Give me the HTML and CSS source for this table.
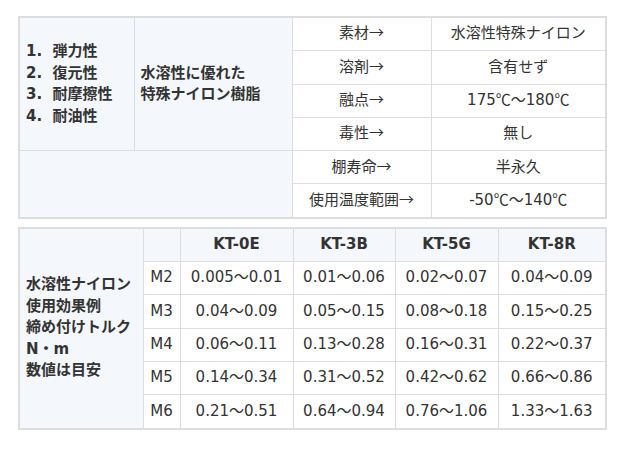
FILE: index.html
```html
<!DOCTYPE html>
<html lang="ja">
<head>
<meta charset="utf-8">
<link rel="stylesheet" href="styles.css">
</head>
<body>
<div class="page">
  <table class="spec">
    <colgroup>
      <col class="c1"><col class="c2"><col class="c3"><col class="c4">
    </colgroup>
    <tbody>
      <tr>
        <td class="head-cell" rowspan="4">1.&nbsp;&nbsp;弾力性<br>2.&nbsp;&nbsp;復元性<br>3.&nbsp;&nbsp;耐摩擦性<br>4.&nbsp;&nbsp;耐油性</td>
        <td class="head-cell" rowspan="4">水溶性に優れた<br>特殊ナイロン樹脂</td>
        <td class="val">素材<span class="jp">→</span></td>
        <td class="val">水溶性特殊ナイロン</td>
      </tr>
      <tr><td class="val">溶剤<span class="jp">→</span></td><td class="val">含有せず</td></tr>
      <tr><td class="val">融点<span class="jp">→</span></td><td class="val">175<span class="jp">℃～</span>180<span class="jp">℃</span></td></tr>
      <tr><td class="val">毒性<span class="jp">→</span></td><td class="val">無し</td></tr>
      <tr>
        <td class="head-cell" colspan="2" rowspan="2"></td>
        <td class="val">棚寿命<span class="jp">→</span></td><td class="val">半永久</td>
      </tr>
      <tr><td class="val">使用温度範囲<span class="jp">→</span></td><td class="val">-50<span class="jp">℃～</span>140<span class="jp">℃</span></td></tr>
    </tbody>
  </table>

  <table class="torque">
    <colgroup>
      <col class="t1"><col class="t2"><col class="t3"><col class="t4"><col class="t5"><col class="t6">
    </colgroup>
    <tbody>
      <tr>
        <td class="head-cell" rowspan="6">水溶性ナイロン<br>使用効果例<br>締め付けトルク<br>N・m<br>数値は目安</td>
        <td class="shade"></td>
        <th class="shade">KT-0E</th>
        <th class="shade">KT-3B</th>
        <th class="shade">KT-5G</th>
        <th class="shade">KT-8R</th>
      </tr>
      <tr><td class="val">M2</td><td class="val">0.005～0.01</td><td class="val">0.01～0.06</td><td class="val">0.02～0.07</td><td class="val">0.04～0.09</td></tr>
      <tr><td class="val">M3</td><td class="val">0.04～0.09</td><td class="val">0.05～0.15</td><td class="val">0.08～0.18</td><td class="val">0.15～0.25</td></tr>
      <tr><td class="val">M4</td><td class="val">0.06～0.11</td><td class="val">0.13～0.28</td><td class="val">0.16～0.31</td><td class="val">0.22～0.37</td></tr>
      <tr><td class="val">M5</td><td class="val">0.14～0.34</td><td class="val">0.31～0.52</td><td class="val">0.42～0.62</td><td class="val">0.66～0.86</td></tr>
      <tr><td class="val">M6</td><td class="val">0.21～0.51</td><td class="val">0.64～0.94</td><td class="val">0.76～1.06</td><td class="val">1.33～1.63</td></tr>
    </tbody>
  </table>
</div>
</body>
</html>
```

FILE: styles.css
```css
html, body {
  margin: 0;
  padding: 0;
  background: #ffffff;
}

body {
  font-family: "DejaVu Sans", "Noto Sans CJK JP", sans-serif;
  font-size: 15px;
  line-height: 21.5px;
  color: #333333;
}

.jp {
  font-family: "Noto Sans CJK JP", sans-serif;
  line-height: 1;
}

.page {
  padding: 16px 18px;
}

table {
  border-collapse: collapse;
  table-layout: fixed;
  width: 587px;
  border: 2px solid #dddddd;
}

.spec {
  margin-bottom: 8px;
}

td, th {
  border: 1px solid #dddddd;
  padding: 5px 6px;
  height: 22.3px;
  vertical-align: middle;
}

.head-cell {
  background: #f4f7fb;
  font-weight: bold;
  text-align: left;
}

.shade {
  background: #f4f7fb;
  font-weight: bold;
  text-align: center;
}

.val {
  text-align: center;
  white-space: nowrap;
}

.c1 { width: 115px; }
.c2 { width: 158px; }
.c3 { width: 139px; }
.c4 { width: 175px; }

.t1 { width: 124px; }
.t2 { width: 37px; }
.t3 { width: 113px; }
.t4 { width: 102px; }
.t5 { width: 103px; }
.t6 { width: 108px; }

.torque .val {
  padding: 5px 2px;
}
```
